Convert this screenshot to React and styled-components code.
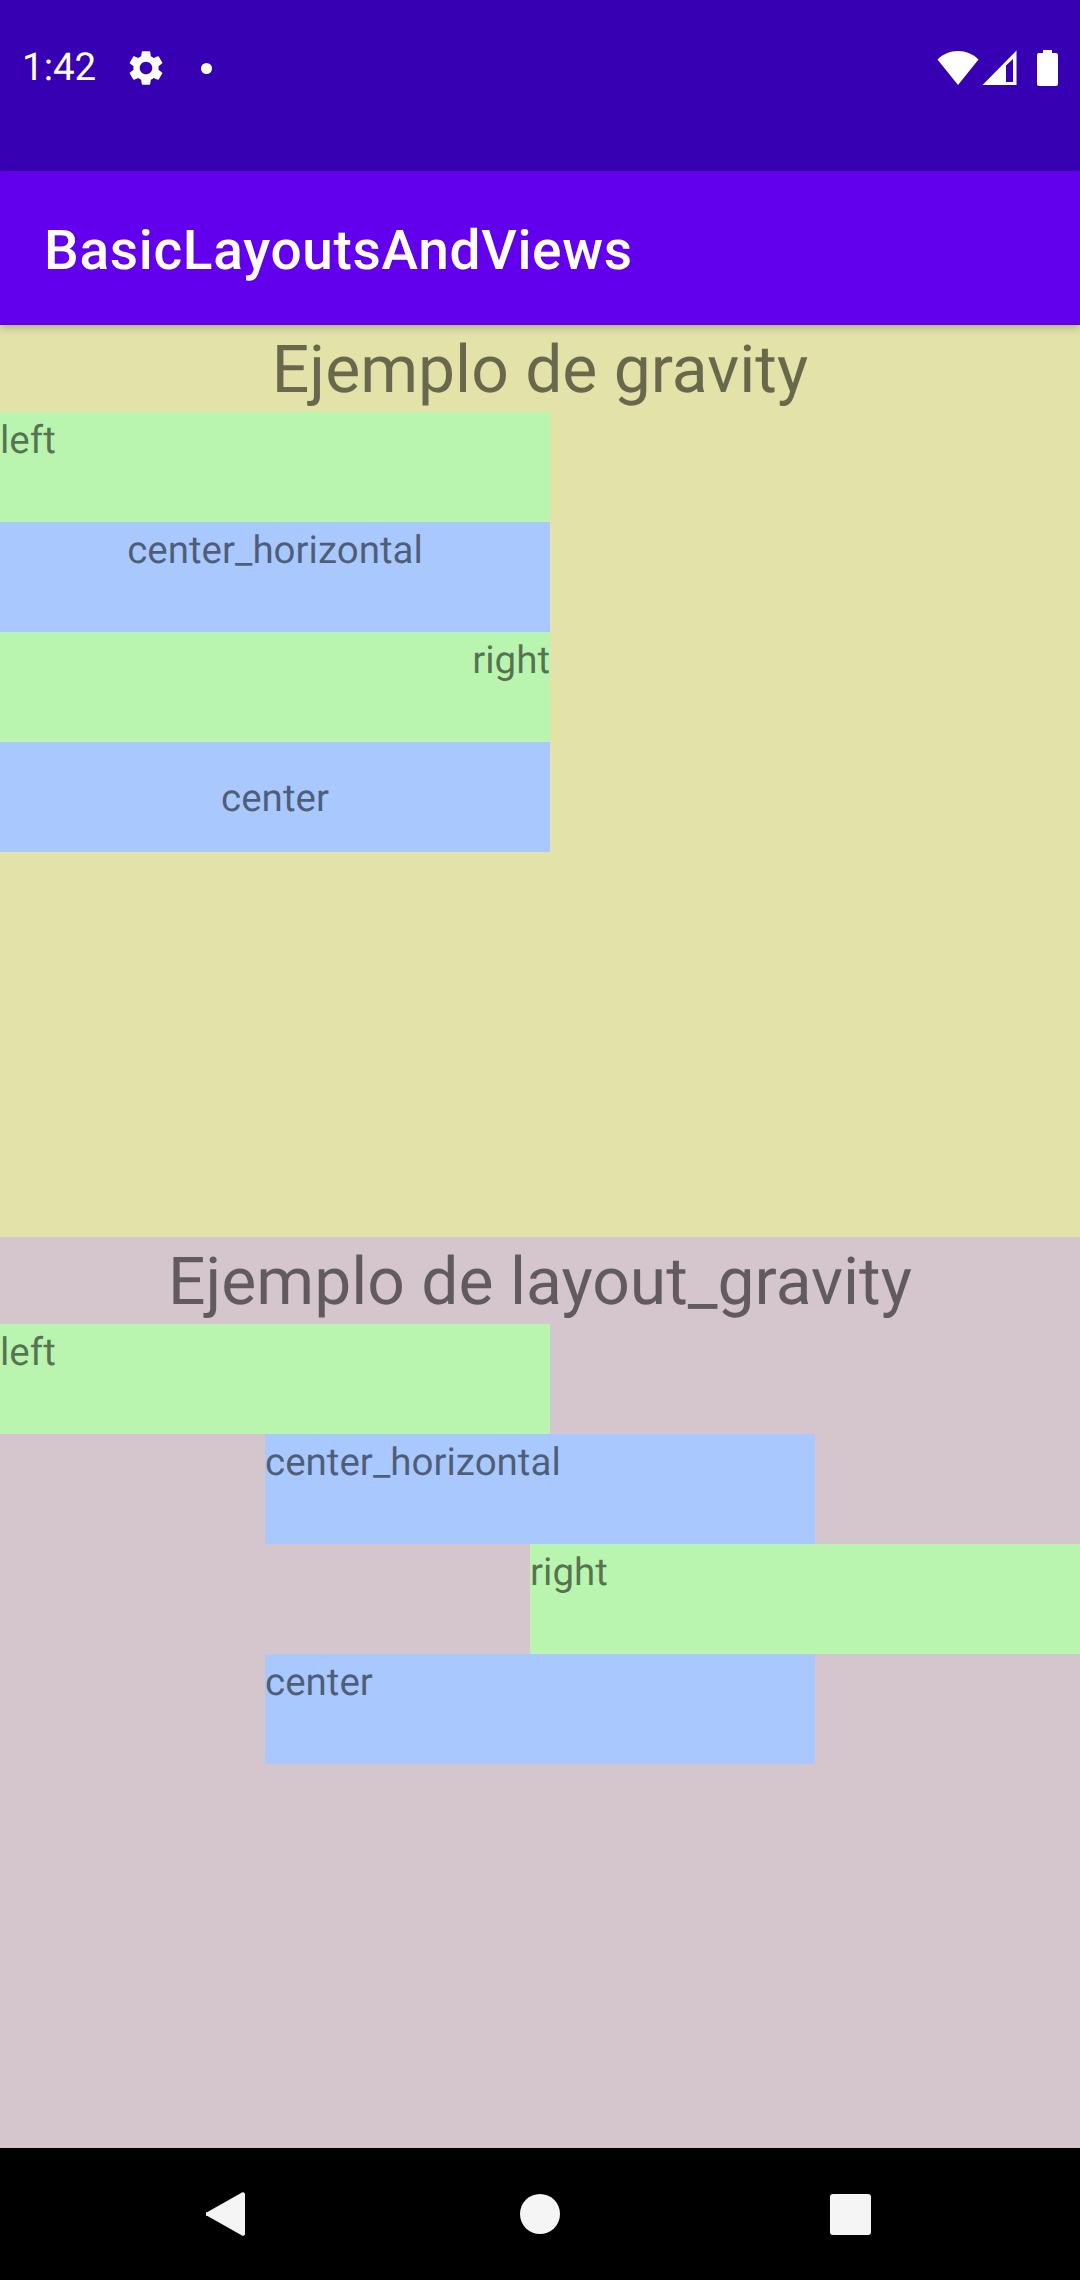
import React from 'react';
import styled, { createGlobalStyle } from 'styled-components';
import { MdSettings } from 'react-icons/md';

const GlobalStyle = createGlobalStyle`
  html, body {
    margin: 0;
    padding: 0;
    background: #000;
  }
  * {
    box-sizing: border-box;
  }
`;

const Screen = styled.div`
  width: 1080px;
  height: 2280px;
  display: flex;
  flex-direction: column;
  overflow: hidden;
  font-family: Roboto, "Liberation Sans", sans-serif;
  text-rendering: geometricPrecision;
`;

const StatusBar = styled.div`
  height: 171px;
  flex: none;
  background: #3700b3;
  color: #fff;
  display: flex;
  align-items: flex-start;
  justify-content: space-between;
  padding: 46px 22px 0 22px;
`;

const StatusGroup = styled.div`
  display: flex;
  align-items: center;
  height: 44px;
`;

const Clock = styled.span`
  font-size: 38.5px;
  line-height: 44px;
  width: 103px;
`;

const Dot = styled.span`
  width: 11px;
  height: 11px;
  margin-left: 34px;
  border-radius: 50%;
  background: #fff;
`;

const AppBar = styled.div`
  height: 154px;
  flex: none;
  background: #6200ee;
  color: #fff;
  display: flex;
  align-items: center;
  padding: 5px 0 0 44px;
  font-size: 55px;
  font-weight: 500;
  letter-spacing: 0.0125em;
  box-shadow: 0 3px 8px rgba(0, 0, 0, 0.22);
  position: relative;
  z-index: 1;
`;

const Content = styled.div`
  flex: 1;
  display: flex;
  flex-direction: column;
`;

const Section = styled.section`
  flex: 1;
  display: flex;
  flex-direction: column;
  background: ${props => props.$bg};
`;

const Title = styled.h2`
  margin: 0;
  height: 87px;
  font-size: 66px;
  line-height: 92px;
  font-weight: 400;
  text-align: center;
  color: rgba(0, 0, 0, 0.54);
`;

const Box = styled.div`
  width: 550px;
  height: 110px;
  flex: none;
  display: flex;
  font-size: 38.5px;
  line-height: 45px;
  color: rgba(0, 0, 0, 0.54);
  background: ${props => props.$bg};
  align-self: ${props => props.$self || 'flex-start'};
  justify-content: ${props => props.$justify || 'flex-start'};
  align-items: ${props => props.$align || 'flex-start'};
  padding-top: ${props => (props.$align ? '3px' : '6px')};
`;

const NavBar = styled.div`
  height: 132px;
  flex: none;
  background: #000;
  display: flex;
  align-items: center;
  justify-content: space-between;
  padding: 0 209px 0 206px;
`;

const HomeButton = styled.svg`
  margin-left: 5px;
`;

const GREEN = '#baf5b0';
const BLUE = '#a9c8fe';

const gravityRows = [
  { text: 'left', bg: GREEN },
  { text: 'center_horizontal', bg: BLUE, justify: 'center' },
  { text: 'right', bg: GREEN, justify: 'flex-end' },
  { text: 'center', bg: BLUE, justify: 'center', align: 'center' },
];

const layoutRows = [
  { text: 'left', bg: GREEN },
  { text: 'center_horizontal', bg: BLUE, self: 'center' },
  { text: 'right', bg: GREEN, self: 'flex-end' },
  { text: 'center', bg: BLUE, self: 'center' },
];

function WifiIcon() {
  return (
    <svg width="42" height="36" viewBox="0 0 42 36">
      <path d="M0.5 9.5C6 4 13 1 21 1s15 3 20.5 8.5L21 35z" fill="#fff" />
    </svg>
  );
}

function SignalIcon() {
  return (
    <svg width="35" height="36" viewBox="0 0 35 36" style={{ marginLeft: 3 }}>
      <path fillRule="evenodd" d="M34.5 0.5V35H0.5zM31 9l-7 6.5V32h7z" fill="#fff" />
    </svg>
  );
}

function BatteryIcon() {
  return (
    <svg width="21" height="36" viewBox="0 0 21 36" style={{ marginLeft: 20 }}>
      <path d="M6 0h9v3h4a2 2 0 0 1 2 2v29a2 2 0 0 1-2 2H2a2 2 0 0 1-2-2V5a2 2 0 0 1 2-2h4z" fill="#fff" />
    </svg>
  );
}

function GravitySection({ title, rows, bg }) {
  return (
    <Section $bg={bg}>
      <Title>{title}</Title>
      {rows.map(row => (
        <Box key={row.text} $bg={row.bg} $justify={row.justify} $align={row.align} $self={row.self}>
          {row.text}
        </Box>
      ))}
    </Section>
  );
}

export default function App() {
  return (
    <Screen>
      <GlobalStyle />
      <StatusBar>
        <StatusGroup>
          <Clock>1:42</Clock>
          <MdSettings size={42} color="#fff" />
          <Dot />
        </StatusGroup>
        <StatusGroup>
          <WifiIcon />
          <SignalIcon />
          <BatteryIcon />
        </StatusGroup>
      </StatusBar>
      <AppBar>BasicLayoutsAndViews</AppBar>
      <Content>
        <GravitySection title="Ejemplo de gravity" rows={gravityRows} bg="#e2e2a9" />
        <GravitySection title="Ejemplo de layout_gravity" rows={layoutRows} bg="#d5c6ce" />
      </Content>
      <NavBar>
        <svg width="39" height="46" viewBox="0 0 39 46">
          <path d="M36 1.5L1.5 21a2 2 0 0 0 0 4L36 44.5a2 2 0 0 0 3-1.5V3a2 2 0 0 0-3-1.5z" fill="#f5f5f5" />
        </svg>
        <HomeButton width="40" height="40" viewBox="0 0 40 40">
          <circle cx="20" cy="20" r="20" fill="#f5f5f5" />
        </HomeButton>
        <svg width="41" height="41" viewBox="0 0 41 41">
          <rect width="41" height="41" rx="3" fill="#f5f5f5" />
        </svg>
      </NavBar>
    </Screen>
  );
}
